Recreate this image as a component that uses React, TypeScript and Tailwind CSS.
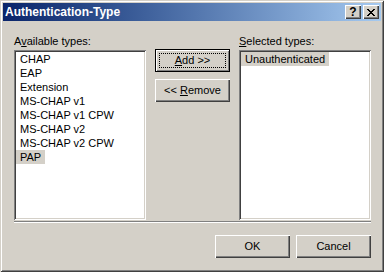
const AVAILABLE = [
  "CHAP",
  "EAP",
  "Extension",
  "MS-CHAP v1",
  "MS-CHAP v1 CPW",
  "MS-CHAP v2",
  "MS-CHAP v2 CPW",
  "PAP",
];

const raised =
  "shadow-[inset_1px_1px_0_#ffffff,inset_-1px_-1px_0_#404040,inset_-2px_-2px_0_#808080]";
const sunken =
  "shadow-[inset_1px_1px_0_#808080,inset_-1px_-1px_0_#ffffff,inset_2px_2px_0_#404040,inset_-2px_-2px_0_#d4d0c8]";

function CaptionButton({ children }: { children: React.ReactNode }) {
  return (
    <div
      className={`flex h-[14px] w-[16px] items-center justify-center bg-[#d4d0c8] ${raised}`}
    >
      {children}
    </div>
  );
}

function Button({ children, isDefault = false }: { children: React.ReactNode; isDefault?: boolean }) {
  if (isDefault) {
    return (
      <div className="h-[23px] w-[75px] border border-black">
        <div
          className={`flex h-full w-full items-center justify-center bg-[#d4d0c8] p-[3px] shadow-[inset_1px_1px_0_#ffffff,inset_-1px_-1px_0_#808080]`}
        >
          <div className="flex h-full w-full items-center justify-center border border-dotted border-black leading-[13px]">
            {children}
          </div>
        </div>
      </div>
    );
  }
  return (
    <div
      className={`flex h-[23px] w-[75px] items-center justify-center bg-[#d4d0c8] leading-[13px] ${raised}`}
    >
      {children}
    </div>
  );
}

function ListItem({ label, selected }: { label: string; selected?: boolean }) {
  return (
    <div
      className={`h-[14px] w-fit px-[4px] leading-[14px] whitespace-nowrap ${
        selected ? "bg-[#d4d0c8]" : ""
      }`}
    >
      {label}
    </div>
  );
}

export default function App() {
  return (
    <div className="flex h-[272px] w-[384px] flex-col bg-[#d4d0c8] p-[3px] font-['Liberation_Sans',Arial,sans-serif] text-[11px] text-black shadow-[inset_1px_1px_0_#d4d0c8,inset_-1px_-1px_0_#404040,inset_2px_2px_0_#ffffff,inset_-2px_-2px_0_#808080]">
      {/* caption */}
      <div className="flex h-[18px] items-center justify-between bg-gradient-to-r from-[#0a246a] to-[#a6caf0] pr-[2px] pl-[2px]">
        <span className="text-[12px] leading-[18px] font-bold text-white">Authentication-Type</span>
        <div className="flex gap-[2px]">
          <CaptionButton>
            <span className="text-[12px] leading-none font-bold">?</span>
          </CaptionButton>
          <CaptionButton>
            <svg width="8" height="7" viewBox="0 0 8 7" shapeRendering="crispEdges">
              <path d="M0 0h2v1h-2zM6 0h2v1h-2zM1 1h2v1h-2zM5 1h2v1h-2zM2 2h4v1h-4zM3 3h2v1h-2zM2 4h4v1h-4zM1 5h2v1h-2zM5 5h2v1h-2zM0 6h2v1h-2zM6 6h2v1h-2z" fill="#000" />
            </svg>
          </CaptionButton>
        </div>
      </div>

      {/* body */}
      <div className="flex flex-col pt-[14px] pr-[10px] pl-[11px]">
        <div className="flex gap-[9px]">
          <div className="flex w-[132px] flex-col">
            <div className="h-[13px] leading-[13px]">
              A<span className="underline underline-offset-[1px]">v</span>ailable types:
            </div>
            <div className={`mt-[2px] h-[170px] bg-white p-[2px] ${sunken}`}>
              {AVAILABLE.map((a) => (
                <ListItem key={a} label={a} selected={a === "PAP"} />
              ))}
            </div>
          </div>

          <div className="flex w-[75px] flex-col gap-[7px] pt-[14px]">
            <Button isDefault>
              <span>
                <span className="underline underline-offset-[1px]">A</span>dd &gt;&gt;
              </span>
            </Button>
            <Button>
              <span>
                &lt;&lt; <span className="underline underline-offset-[1px]">R</span>emove
              </span>
            </Button>
          </div>

          <div className="flex w-[132px] flex-col">
            <div className="h-[13px] leading-[13px]">
              <span className="underline underline-offset-[1px]">S</span>elected types:
            </div>
            <div className={`mt-[2px] h-[170px] bg-white p-[2px] ${sunken}`}>
              <ListItem label="Unauthenticated" selected />
            </div>
          </div>
        </div>

        <div className="mt-[1px] h-[2px] border-t border-b border-t-[#808080] border-b-white" />

        <div className="mt-[12px] flex justify-end gap-[6px]">
          <Button>OK</Button>
          <Button>Cancel</Button>
        </div>
      </div>
    </div>
  );
}
